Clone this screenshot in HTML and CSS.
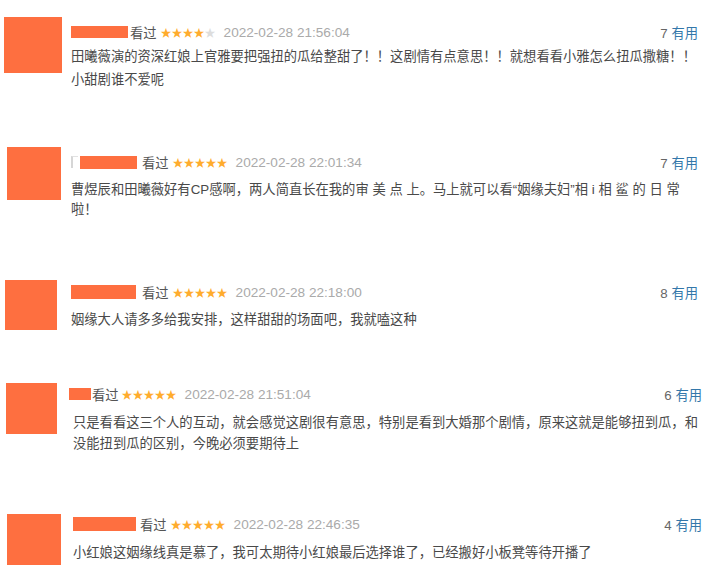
FILE: index.html
```html
<!DOCTYPE html>
<html lang="zh-CN">
<head>
<meta charset="utf-8">
<title>短评</title>
<link rel="stylesheet" href="styles.css">
</head>
<body>
<div class="list">
  <div class="item item-1">
    <div class="avatar"></div>
    <div class="main">
      <div class="head">
        <span class="name"></span>
        <span class="watched">看过</span>
        <span class="stars">★★★★<span class="off">★</span></span>
        <span class="date">2022-02-28 21:56:04</span>
        <span class="votes">7 <span class="useful">有用</span></span>
      </div>
      <p class="text">田曦薇演的资深红娘上官雅要把强扭的瓜给整甜了！！这剧情有点意思！！就想看看小雅怎么扭瓜撒糖！！<br>小甜剧谁不爱呢</p>
    </div>
  </div>

  <div class="item item-2">
    <div class="avatar"></div>
    <div class="main">
      <div class="head">
        <span class="frag"></span>
        <span class="name"></span>
        <span class="watched">看过</span>
        <span class="stars">★★★★★</span>
        <span class="date">2022-02-28 22:01:34</span>
        <span class="votes">7 <span class="useful">有用</span></span>
      </div>
      <p class="text">曹煜辰和田曦薇好有CP感啊，两人简直长在我的审 美 点 上。马上就可以看“姻缘夫妇”相 i 相 鲨 的 日 常<br>啦！</p>
    </div>
  </div>

  <div class="item item-3">
    <div class="avatar"></div>
    <div class="main">
      <div class="head">
        <span class="name"></span>
        <span class="watched">看过</span>
        <span class="stars">★★★★★</span>
        <span class="date">2022-02-28 22:18:00</span>
        <span class="votes">8 <span class="useful">有用</span></span>
      </div>
      <p class="text">姻缘大人请多多给我安排，这样甜甜的场面吧，我就嗑这种</p>
    </div>
  </div>

  <div class="item item-4">
    <div class="avatar"></div>
    <div class="main">
      <div class="head">
        <span class="name"></span>
        <span class="watched">看过</span>
        <span class="stars">★★★★★</span>
        <span class="date">2022-02-28 21:51:04</span>
        <span class="votes">6 <span class="useful">有用</span></span>
      </div>
      <p class="text">只是看看这三个人的互动，就会感觉这剧很有意思，特别是看到大婚那个剧情，原来这就是能够扭到瓜，和<br>没能扭到瓜的区别，今晚必须要期待上</p>
    </div>
  </div>

  <div class="item item-5">
    <div class="avatar"></div>
    <div class="main">
      <div class="head">
        <span class="name"></span>
        <span class="watched">看过</span>
        <span class="stars">★★★★★</span>
        <span class="date">2022-02-28 22:46:35</span>
        <span class="votes">4 <span class="useful">有用</span></span>
      </div>
      <p class="text">小红娘这姻缘线真是慕了，我可太期待小红娘最后选择谁了，已经搬好小板凳等待开播了</p>
    </div>
  </div>
</div>
</body>
</html>
```

FILE: styles.css
```css
html, body {
  margin: 0;
  padding: 0;
  background: #ffffff;
}

body {
  font-family: "Liberation Sans", "Noto Sans CJK SC", sans-serif;
  font-size: 13.3px;
  color: #494949;
}

.list {
  width: 710px;
}

.item {
  display: flex;
  align-items: flex-start;
  box-sizing: border-box;
  overflow: hidden;
}

.avatar {
  flex: none;
  background: #fe6f40;
}

.main {
  flex: 1;
  min-width: 0;
}

.head {
  display: flex;
  align-items: center;
  height: 20px;
  white-space: nowrap;
}

.name {
  display: block;
  flex: none;
  background: #fe6f40;
}

.frag {
  display: block;
  flex: none;
  width: 7px;
  height: 12px;
  margin-right: 2px;
  border-left: 2px solid #d6d6d6;
  border-top: 1px solid #e2e2e2;
  box-sizing: border-box;
}

.watched {
  color: #555555;
}

.stars {
  color: #ffac2d;
  font-family: "Noto Sans CJK SC", sans-serif;
  font-size: 11px;
  line-height: 1;
  margin-left: 4px;
}

.stars .off {
  color: #dddddd;
}

.date {
  color: #aaaaaa;
  margin-left: 8px;
  font-size: 13.6px;
}

.votes {
  margin-left: auto;
  color: #666666;
}

.useful {
  color: #3377aa;
}

.text {
  margin: 0;
  white-space: nowrap;
  color: #494949;
}

/* item 1 */
.item-1 { height: 135px; padding-left: 4px; }
.item-1 .avatar { width: 58px; height: 56px; margin-top: 17px; }
.item-1 .main { margin-left: 9px; margin-top: 22px; padding-right: 12px; }
.item-1 .name { width: 57px; height: 12px; }
.item-1 .watched { margin-left: 2px; }
.item-1 .text { line-height: 23px; margin-top: 3px; }

/* item 2 */
.item-2 { height: 135px; padding-left: 7px; }
.item-2 .avatar { width: 54px; height: 53px; margin-top: 12px; }
.item-2 .main { margin-left: 10px; margin-top: 17px; padding-right: 12px; }
.item-2 .name { width: 57px; height: 13px; }
.item-2 .watched { margin-left: 5px; }
.item-2 .text { line-height: 20px; margin-top: 8px; }

/* item 3 */
.item-3 { height: 100px; padding-left: 5px; }
.item-3 .avatar { width: 52px; height: 50px; margin-top: 10px; }
.item-3 .main { margin-left: 14px; margin-top: 12px; padding-right: 12px; }
.item-3 .name { width: 65px; height: 14px; }
.item-3 .watched { margin-left: 6px; }
.item-3 .text { line-height: 22px; margin-top: 7px; }

/* item 4 */
.item-4 { height: 130px; padding-left: 6px; }
.item-4 .avatar { width: 51px; height: 51px; margin-top: 13px; }
.item-4 .main { margin-left: 16px; margin-top: 14px; padding-right: 8px; }
.item-4 .name { width: 22px; height: 12px; margin-left: -4px; }
.item-4 .watched { margin-left: 1px; }
.item-4 .stars { margin-left: 3px; }
.item-4 .text { line-height: 21px; margin-top: 8px; }

/* item 5 */
.item-5 { height: 80px; padding-left: 7px; }
.item-5 .avatar { width: 54px; height: 51px; margin-top: 14px; }
.item-5 .main { margin-left: 12px; margin-top: 14px; padding-right: 8px; }
.item-5 .name { width: 63px; height: 14px; }
.item-5 .watched { margin-left: 4px; }
.item-5 .text { line-height: 22px; margin-top: 8px; }
```
